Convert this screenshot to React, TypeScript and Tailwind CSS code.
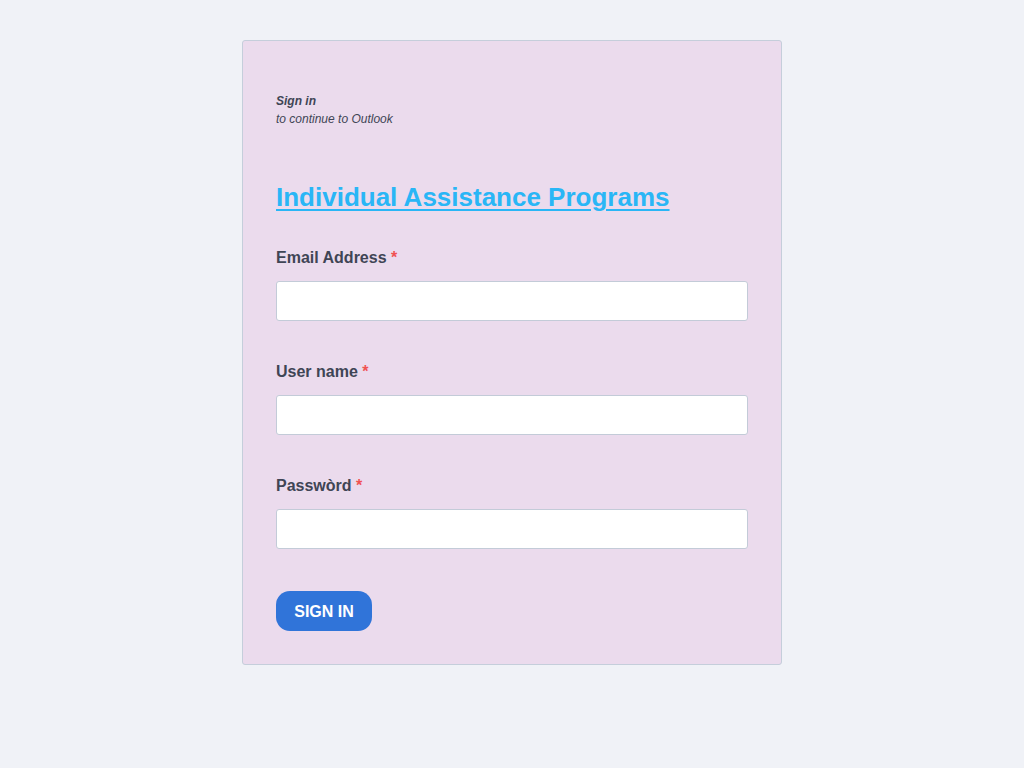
import React from "react";

function Field({ label, type }: { label: string; type: string }) {
  return (
    <div className="flex flex-col">
      <label className="text-[16px] leading-[24px] font-bold text-[#3f4555]">
        {label} <span className="text-[#f05252]">*</span>
      </label>
      <input
        type={type}
        className="mt-[11px] h-[40px] w-full rounded-[3px] border border-[#c3cbd8] bg-white px-3 outline-none"
      />
    </div>
  );
}

export default function App() {
  return (
    <div
      className="min-h-[768px] w-full bg-[#f0f2f7] pt-[40px]"
      style={{ fontFamily: '"Liberation Sans", Arial, sans-serif' }}
    >
      <div className="mx-auto w-[540px] rounded-[3px] border border-[#c5cedb] bg-[#ebdbed] px-[33px] pt-[51px] pb-[33px]">
        <div className="text-[12px] leading-[18px] italic text-[#3f4555]">
          <div className="font-bold">Sign in</div>
          <div>to continue to Outlook</div>
        </div>
        <h1 className="mt-[51px] text-[26px] leading-[36px] font-bold text-[#29b6f6] underline decoration-2 underline-offset-[3px]">
          Individual Assistance Programs
        </h1>
        <div className="mt-[31px] flex flex-col gap-[39px]">
          <Field label="Email Address" type="email" />
          <Field label="User name" type="text" />
          <Field label="Passwòrd" type="password" />
        </div>
        <button className="mt-[42px] h-[40px] w-[96px] rounded-[14px] bg-[#3074d9] pt-[2px] text-[16px] font-bold text-white">
          SIGN IN
        </button>
      </div>
    </div>
  );
}
